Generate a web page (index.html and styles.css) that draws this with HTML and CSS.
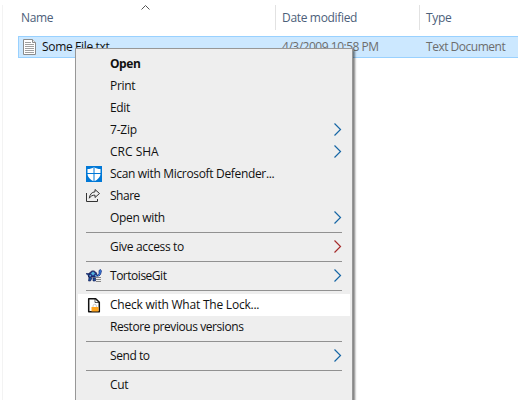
FILE: index.html
```html
<!DOCTYPE html>
<html lang="en">
<head>
<meta charset="utf-8">
<title>Files</title>
<link rel="stylesheet" href="styles.css">
</head>
<body>
<svg class="defs" width="0" height="0"><defs><path id="chev" d="M.5 .5l6 6-6 6" fill="none"/></defs></svg>
<main class="explorer">
  <header class="columns">
    <div class="col name"><span class="t">Name</span>
      <svg class="sort" width="9" height="5" viewBox="0 0 9 5"><path d="M.5 4.5l4-4 4 4" fill="none" stroke="#555"/></svg>
    </div>
    <div class="col date"><span class="t">Date modified</span></div>
    <div class="col type"><span class="t">Type</span></div>
  </header>
  <div class="row">
    <div class="cell file">
      <svg width="13" height="16" viewBox="0 0 13 16"><path d="M.5 .5h9l3 3v12H.5z" fill="#fff" stroke="#8b8b8b"/><path d="M9.500 .5v3h3" fill="#eee" stroke="#8b8b8b"/><path d="M2 3.500h6M2 5.500h9M2 7.500h9M2 9.500h9M2 11.500h9M2 13.500h9" stroke="#a0a0a0"/></svg>
      <span class="t">Some File.txt</span>
    </div>
    <div class="cell"><span class="t tighter">4/3/2009 10:58 PM</span></div>
    <div class="cell"><span class="t tighter">Text Document</span></div>
  </div>
</main>
<nav class="menu">
  <div class="item bold"><i class="icon"></i><span class="t tight">Open</span></div>
  <div class="item"><i class="icon"></i><span class="t">Print</span></div>
  <div class="item"><i class="icon"></i><span class="t">Edit</span></div>
  <div class="item"><i class="icon"></i><span class="t wide">7-Zip</span><svg class="arrow" width="8" height="13" viewBox="0 0 8 13"><use href="#chev"/></svg></div>
  <div class="item"><i class="icon"></i><span class="t wider">CRC SHA</span><svg class="arrow" width="8" height="13" viewBox="0 0 8 13"><use href="#chev"/></svg></div>
  <div class="item"><i class="icon"><svg width="16" height="16" viewBox="0 0 16 16"><path d="M0 0h16v16H0z" fill="#0078d7"/><path d="M8 1C6.200 2.500 4 3 1.500 3v4.500C1.500 11 4 13.700 8 15.300c4-1.600 6.500-4.300 6.500-7.800V3C12 3 9.800 2.500 8 1z" fill="#fff"/><path d="M8 1v15M1 7.500h14" stroke="#0078d7"/></svg></i><span class="t">Scan with Microsoft Defender...</span></div>
  <div class="item"><i class="icon"><svg width="16" height="16" viewBox="0 0 16 16" fill="none" stroke="#333"><path d="M.5 5v8.500h11V11M9 1.500l4.500 4-4.500 4V7.200C6.500 7 4.700 8 3.300 10.200 3.700 6.500 5.800 4 9 3.800z"/></svg></i><span class="t tighter">Share</span></div>
  <div class="item"><i class="icon"></i><span class="t">Open with</span><svg class="arrow" width="8" height="13" viewBox="0 0 8 13"><use href="#chev"/></svg></div>
  <hr>
  <div class="item"><i class="icon"></i><span class="t">Give access to</span><svg class="arrow red" width="8" height="13" viewBox="0 0 8 13"><use href="#chev"/></svg></div>
  <hr>
  <div class="item"><i class="icon"><svg width="16" height="16" viewBox="0 0 16 16"><path d="M0 5.500h3.500v2H2zM3 9l3 1-1.500 3H2.500zM7 10h2.500v3H7z" fill="#1c4f9c" stroke="#101850" stroke-width=".6"/><path d="M2.500 9C3 5 4.500 3 7 3s4 2 4.500 6z" fill="#26398a" stroke="#101850"/><path d="M5 5.500l2-2 2 2-2 2zM3.500 7h1.500v1.500H3.500zM9 7h1.500v1.500H9z" fill="#54b5db"/><path d="M11 8l2-2V2.500l1.500-1 1 1.500-1 3.500-2 2z" fill="#3c7cdd" stroke="#102878" stroke-width=".7"/><path d="M10 8.500h5V15h-5z" fill="#eee"/><path d="M10 9.500h5M10 11.500h5M10 13.500h5" stroke="#888"/></svg></i><span class="t tighter">TortoiseGit</span><svg class="arrow" width="8" height="13" viewBox="0 0 8 13"><use href="#chev"/></svg></div>
  <hr>
  <div class="item active"><i class="icon"><svg width="16" height="16" viewBox="0 0 16 16"><path d="M2.700 1.700h7l3.600 3.600v9.500H2.700z" fill="#fff" stroke="#111" stroke-width="1.500" stroke-linejoin="round"/><path d="M9 2v3.500h4" fill="none" stroke="#111" stroke-width=".7"/><path d="M7 10V9a1.700 1.700 0 013.400 0v1" fill="none" stroke="#ccc"/><path d="M5.500 10H12.500v4.500H5.500z" fill="#ffa51f"/></svg></i><span class="t wide">Check with What The Lock...</span></div>
  <div class="item"><i class="icon"></i><span class="t tight">Restore previous versions</span></div>
  <hr>
  <div class="item"><i class="icon"></i><span class="t tight">Send to</span><svg class="arrow" width="8" height="13" viewBox="0 0 8 13"><use href="#chev"/></svg></div>
  <hr>
  <div class="item"><i class="icon"></i><span class="t">Cut</span></div>
</nav>
</body>
</html>
```
FILE: styles.css
```css
* { box-sizing: border-box; }
body {
  margin: 0;
  width: 518px;
  height: 400px;
  overflow: hidden;
  background: #fff;
  color: #111;
  font: 12px/22px "Open Sans", "Noto Sans", sans-serif;
}
.defs { position: absolute; }
.explorer {
  padding: 5px 0 0 2px;
  height: 400px;
  background: linear-gradient(#f3f3f3, #f3f3f3) 2px 5px / 1px 395px no-repeat;
}
.columns { display: grid; grid-template-columns: 274px 144px 1fr; height: 25px; color: #4c607a; }
.col { position: relative; border-right: 1px solid #e2e2e2; padding-left: 6px; line-height: 25px; }
.col.name { padding-left: 19px; }
.col.type { border: 0; }
.sort { position: absolute; left: 139px; top: 0; }
.row {
  display: grid;
  grid-template-columns: 263px 144px 1fr;
  margin: 6px 0 0 16px;
  height: 22px;
  background: #cce8ff;
  border: 1px solid #99d1ff;
  border-right: 0;
  line-height: 20px;
  color: #6d6d6d;
}
.cell { display: flex; align-items: center; }
.file { color: #111; gap: 6px; padding-left: 4px; }
.t { display: inline-block; white-space: nowrap; letter-spacing: -0.33px; }
.tight { letter-spacing: -0.43px; }
.tighter { letter-spacing: -0.48px; }
.wide { letter-spacing: -0.22px; }
.wider { letter-spacing: 0; }

.menu {
  position: absolute;
  left: 75px;
  top: 48px;
  width: 278px;
  height: 352px;
  padding: 4px 2px 0;
  background: #eee;
  border: 1px solid #979797;
  border-bottom: 0;
  box-shadow: 2px 2px 2px rgba(0, 0, 0, .5);
}
.item { display: flex; align-items: center; height: 22px; padding: 0 8px; }
.item.active { background: #fff; }
.icon { display: flex; width: 16px; height: 16px; margin-right: 8px; }
.bold .t { font-weight: 700; }
.arrow { margin: -1px 0 0 auto; stroke: #1666a5; stroke-width: 1.2; }
.arrow.red { stroke: #a52c2c; }
hr { height: 1px; margin: 3px 8px; border: 0; background: #919191; }
```
